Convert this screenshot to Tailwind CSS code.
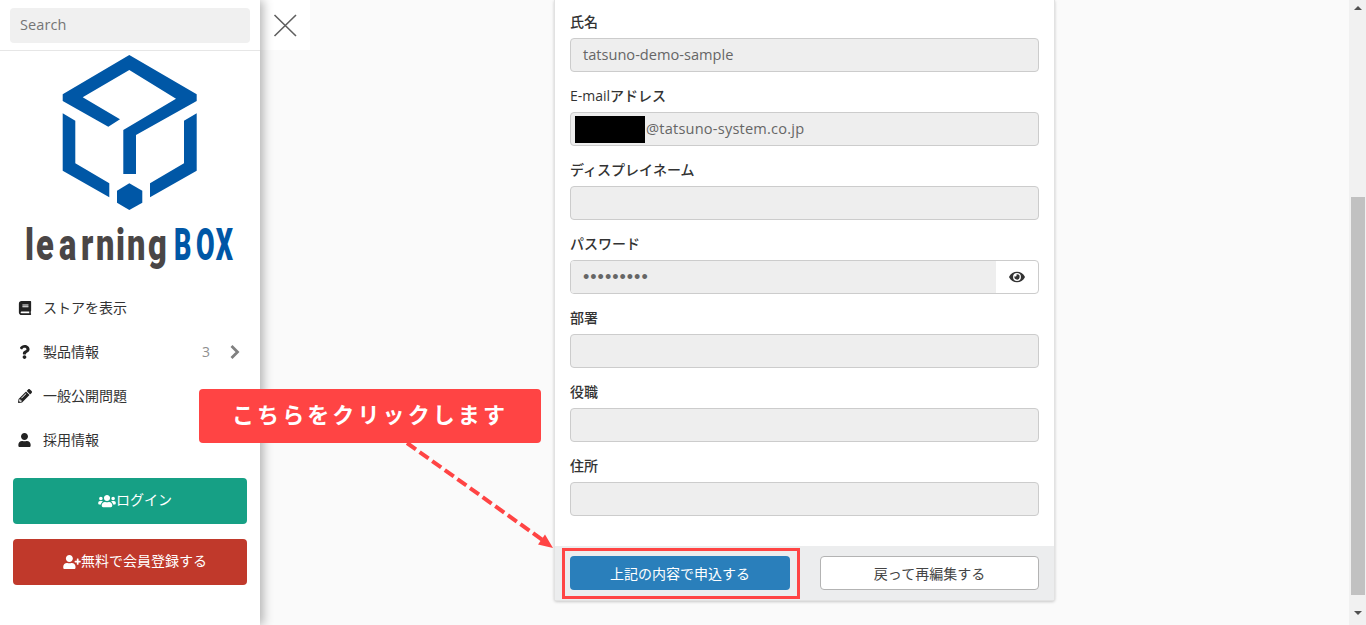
<!DOCTYPE html>
<html lang="ja">
<head>
<meta charset="utf-8">
<script src="https://cdn.jsdelivr.net/npm/@tailwindcss/browser@4"></script>
<title>learningBOX</title>
</head>
<body class="m-0 overflow-hidden">
<div class="relative flex h-[625px] w-[1366px] overflow-hidden bg-[#fafafa] font-['Open_Sans','Noto_Sans_CJK_JP',sans-serif] text-[14px] text-[#333]">

  <!-- Sidebar -->
  <aside class="relative z-10 flex w-[260px] shrink-0 flex-col bg-white shadow-[3px_0_10px_rgba(0,0,0,0.3)]">
    <div class="h-[51px] shrink-0 border-b border-[#e6e6e6] px-[10px] pt-[8px]">
      <div class="flex h-[35px] items-center rounded-[4px] bg-[#f0f0f0] px-[10px] pb-[2px] text-[14.5px] tracking-[0.1px] text-[#757575]">Search</div>
    </div>
    <div class="h-[226px] shrink-0">
      <svg class="block" width="260" height="226" viewBox="0 51 260 226">
        <g fill="#0057a6">
          <path d="M129.3 55 196.7 94.3V101L136 135V174H123.3V130L176 98.7 129.3 70 82.7 97.3 120 119.3 108.3 126.7 62.7 101V94.3Z"/>
          <path d="M62.7 113.3 75.3 120.7V163.3L109.3 183.3V197.3L62.7 170.7Z"/>
          <path d="M196.7 113.3 184 120.7V163.3L150 183.3V197.3L196.7 170.7Z"/>
          <path d="M129.3 183.3 142.3 190.7V202.7L129.3 210 117 202.7V190.7Z"/>
        </g>
        <text transform="translate(0 260) scale(0.75 1)" x="33.3 48 78.7 108 128 154.7 169.3 197.3" font-family="Roboto" font-weight="900" font-size="43.5" fill="#4a4646">learning</text>
        <text transform="translate(0 260) scale(0.62 1)" x="280.6 316 348" font-family="Roboto" font-weight="900" font-size="43.5" fill="#0057a6">BOX</text>
      </svg>
    </div>
    <nav class="flex flex-col px-[17px] pt-[9px]">
      <div class="flex h-[44px] items-center">
        <span class="flex w-[15px] justify-center"><svg class="h-[14px] w-[14px]" viewBox="0 0 448 512" fill="#222"><path d="M448 360V24c0-13.3-10.7-24-24-24H96C43 0 0 43 0 96v320c0 53 43 96 96 96h328c13.3 0 24-10.7 24-24v-16c0-7.5-3.5-14.3-8.9-18.7-4.2-15.4-4.2-59.3 0-74.7 5.4-4.3 8.9-11.1 8.9-18.6zM128 134c0-3.3 2.7-6 6-6h212c3.3 0 6 2.7 6 6v20c0 3.3-2.7 6-6 6H134c-3.3 0-6-2.7-6-6v-20zm0 64c0-3.3 2.7-6 6-6h212c3.3 0 6 2.7 6 6v20c0 3.3-2.7 6-6 6H134c-3.3 0-6-2.7-6-6v-20zm253.4 250H96c-17.7 0-32-14.3-32-32 0-17.6 14.4-32 32-32h285.4c-1.9 17.1-1.9 46.9 0 64z"/></svg></span>
        <span class="ml-[11px] pb-[2px]">ストアを表示</span>
      </div>
      <div class="flex h-[44px] items-center">
        <span class="flex w-[15px] justify-center"><svg class="h-[14px] w-[11px]" viewBox="0 0 384 512" fill="#222"><path d="M202.021 0C122.202 0 70.503 32.703 29.914 91.026c-7.363 10.58-5.093 25.086 5.178 32.874l43.138 32.709c10.373 7.865 25.132 6.026 33.253-4.148 25.049-31.381 43.63-49.449 82.757-49.449 30.764 0 68.816 19.799 68.816 49.631 0 22.552-18.617 34.134-48.993 51.164-35.423 19.86-82.299 44.576-82.299 106.405V320c0 13.255 10.745 24 24 24h72.471c13.255 0 24-10.745 24-24v-5.773c0-42.86 125.268-44.645 125.268-160.627C377.504 66.256 286.902 0 202.021 0zM192 373.459c-38.196 0-69.271 31.075-69.271 69.271 0 38.195 31.075 69.27 69.271 69.27s69.271-31.075 69.271-69.271-31.075-69.27-69.271-69.27z"/></svg></span>
        <span class="ml-[11px] pb-[2px]">製品情報</span>
        <span class="ml-auto pb-[2px] text-[#8f8f8f]">3</span>
        <svg class="ml-[20px] mr-[3px] h-[14px] w-[10px]" viewBox="0 0 10 14" fill="none" stroke="#808080" stroke-width="2.8"><path d="M1.5 1 7.5 7 1.5 13"/></svg>
      </div>
      <div class="flex h-[44px] items-center">
        <span class="flex w-[15px] justify-center"><svg class="h-[14px] w-[14px]" viewBox="0 0 512 512" fill="#222"><path d="M497.9 142.1l-46.1 46.1c-4.7 4.7-12.3 4.7-17 0l-111-111c-4.7-4.7-4.7-12.3 0-17l46.1-46.1c18.7-18.7 49.1-18.7 67.9 0l60.1 60.1c18.8 18.7 18.8 49.1 0 67.9zM284.2 99.8L21.6 362.4.4 483.9c-2.9 16.4 11.4 30.6 27.8 27.8l121.5-21.3 262.6-262.6c4.7-4.7 4.7-12.3 0-17l-111-111c-4.8-4.7-12.4-4.7-17.1 0zM124.1 339.9c-5.5-5.5-5.5-14.3 0-19.8l154-154c5.5-5.5 14.3-5.5 19.8 0s5.5 14.3 0 19.8l-154 154c-5.5 5.5-14.3 5.5-19.8 0zM88 424h48v36.3l-64.5 11.3-31.1-31.1L51.7 376H88v48z"/></svg></span>
        <span class="ml-[11px] pb-[2px]">一般公開問題</span>
      </div>
      <div class="flex h-[44px] items-center">
        <span class="flex w-[15px] justify-center"><svg class="h-[14px] w-[13px]" viewBox="0 0 448 512" fill="#222"><path d="M224 256c70.7 0 128-57.3 128-128S294.7 0 224 0 96 57.3 96 128s57.3 128 128 128zm89.6 32h-16.7c-22.2 10.2-46.9 16-72.9 16s-50.6-5.8-72.9-16h-16.7C60.2 288 0 348.2 0 422.4V464c0 26.5 21.5 48 48 48h352c26.5 0 48-21.5 48-48v-41.6c0-74.2-60.2-134.4-134.4-134.4z"/></svg></span>
        <span class="ml-[11px] pb-[2px]">採用情報</span>
      </div>
    </nav>
    <div class="flex flex-col gap-[15px] px-[13px] pt-[16px] text-white">
      <div class="flex h-[46px] items-center justify-center rounded-[4px] bg-[#16a085] pl-[10px]">
        <svg class="h-[14px] w-[18px]" viewBox="0 0 640 512" fill="#fff"><path d="M96 224c35.3 0 64-28.7 64-64s-28.7-64-64-64-64 28.7-64 64 28.7 64 64 64zm448 0c35.3 0 64-28.7 64-64s-28.7-64-64-64-64 28.7-64 64 28.7 64 64 64zm32 32h-64c-17.6 0-33.5 7.1-45.1 18.6 40.3 22.1 68.9 62 75.1 109.4h66c17.7 0 32-14.3 32-32v-32c0-35.3-28.7-64-64-64zm-256 0c61.9 0 112-50.1 112-112S381.9 32 320 32 208 82.1 208 144s50.1 112 112 112zm76.8 32h-8.3c-20.8 10-43.9 16-68.5 16s-47.6-6-68.5-16h-8.3C179.6 288 128 339.6 128 403.2V432c0 26.5 21.5 48 48 48h288c26.5 0 48-21.5 48-48v-28.8c0-63.6-51.6-115.2-115.2-115.2zm-223.7-13.4C161.5 263.1 145.6 256 128 256H64c-35.3 0-64 28.7-64 64v32c0 17.7 14.3 32 32 32h65.9c6.3-47.4 34.9-87.3 75.2-109.4z"/></svg>
        <span class="pb-[4px]">ログイン</span>
      </div>
      <div class="flex h-[46px] items-center justify-center rounded-[4px] bg-[#c0392b] pl-[10px]">
        <svg class="h-[14px] w-[18px]" viewBox="0 0 640 512" fill="#fff"><path d="M624 208h-64v-64c0-8.8-7.2-16-16-16h-32c-8.8 0-16 7.2-16 16v64h-64c-8.8 0-16 7.2-16 16v32c0 8.8 7.2 16 16 16h64v64c0 8.8 7.2 16 16 16h32c8.8 0 16-7.2 16-16v-64h64c8.8 0 16-7.2 16-16v-32c0-8.8-7.2-16-16-16zm-400 48c70.7 0 128-57.3 128-128S294.7 0 224 0 96 57.3 96 128s57.3 128 128 128zm89.6 32h-16.7c-22.2 10.2-46.9 16-72.9 16s-50.6-5.8-72.9-16h-16.7C60.2 288 0 348.2 0 422.4V464c0 26.5 21.5 48 48 48h352c26.5 0 48-21.5 48-48v-41.6c0-74.2-60.2-134.4-134.4-134.4z"/></svg>
        <span class="pb-[4px]">無料で会員登録する</span>
      </div>
    </div>
  </aside>

  <!-- Main -->
  <main class="flex flex-1 items-start">
    <div class="flex h-[50px] w-[50px] shrink-0 items-center justify-center bg-white">
      <svg width="24" height="24" viewBox="0 0 24 24" stroke="#5f5f5f" stroke-width="1.6" fill="none"><path d="M1.5 2 23 23M23 2 1.5 23"/></svg>
    </div>
    <section class="ml-[244px] flex h-[601px] w-[501px] shrink-0 flex-col rounded-b-[3px] border-x border-b border-[#e2e2e2] bg-white shadow-[0_1px_3px_rgba(0,0,0,0.2)]">
      <div class="flex flex-1 flex-col px-[15px] pt-[12px]">
        <div class="h-[74px]"><div class="mb-[6px] h-[20px] font-medium leading-[20px]">氏名</div><div class="flex h-[34px] items-center rounded-[4px] border border-[#ccc] bg-[#eee] px-[12px] text-[14.6px] text-[#666]">tatsuno-demo-sample</div></div>
        <div class="h-[74px]"><div class="mb-[6px] h-[20px] font-medium leading-[20px]">E-mailアドレス</div><div class="flex h-[34px] items-center rounded-[4px] border border-[#ccc] bg-[#eee] pl-[4px] text-[14.6px] tracking-[0.2px] text-[#666]"><span class="h-[27px] w-[70px] bg-black"></span><span class="ml-px">@tatsuno-system.co.jp</span></div></div>
        <div class="h-[74px]"><div class="mb-[6px] h-[20px] font-medium leading-[20px]">ディスプレイネーム</div><div class="h-[34px] rounded-[4px] border border-[#ccc] bg-[#eee]"></div></div>
        <div class="h-[74px]"><div class="mb-[6px] h-[20px] font-medium leading-[20px]">パスワード</div><div class="flex h-[34px] overflow-hidden rounded-[4px] border border-[#ccc] bg-white"><div class="flex flex-1 items-center bg-[#eee] pl-[12px] font-['Liberation_Sans',sans-serif] text-[18px] tracking-[1px] text-[#666]">•••••••••</div><div class="flex w-[42px] items-center justify-center"><svg class="h-[14px] w-[16px]" viewBox="0 0 576 512" fill="#333"><path d="M572.52 241.4C518.29 135.59 410.93 64 288 64S57.68 135.64 3.48 241.41a32.35 32.35 0 0 0 0 29.19C57.71 376.41 165.07 448 288 448s230.32-71.64 284.52-177.41a32.35 32.35 0 0 0 0-29.19zM288 400a144 144 0 1 1 144-144 143.93 143.93 0 0 1-144 144zm0-240a95.31 95.31 0 0 0-25.31 3.79 47.85 47.85 0 0 1-66.9 66.9A95.78 95.78 0 1 0 288 160z"/></svg></div></div></div>
        <div class="h-[74px]"><div class="mb-[6px] h-[20px] font-medium leading-[20px]">部署</div><div class="h-[34px] rounded-[4px] border border-[#ccc] bg-[#eee]"></div></div>
        <div class="h-[74px]"><div class="mb-[6px] h-[20px] font-medium leading-[20px]">役職</div><div class="h-[34px] rounded-[4px] border border-[#ccc] bg-[#eee]"></div></div>
        <div class="h-[74px]"><div class="mb-[6px] h-[20px] font-medium leading-[20px]">住所</div><div class="h-[34px] rounded-[4px] border border-[#ccc] bg-[#eee]"></div></div>
      </div>
      <div class="flex h-[54px] items-start gap-[30px] bg-[#ecedee] px-[15px] pt-[10px]">
        <div class="flex h-[34px] w-[220px] items-center justify-center rounded-[4px] bg-[#2a7fbb] text-white">上記の内容で申込する</div>
        <div class="flex h-[34px] w-[219px] items-center justify-center rounded-[4px] border border-[#b3b3b3] bg-white text-[#444]">戻って再編集する</div>
      </div>
    </section>
  </main>

  <!-- Scrollbar -->
  <div class="absolute right-0 top-0 flex h-[625px] w-[17px] flex-col items-center bg-[#f1f1f1]">
    <svg class="mt-[6px] h-[4px] w-[8px]" viewBox="0 0 8 4" fill="#505050"><path d="M4 0 8 4H0Z"/></svg>
    <div class="mt-[187px] h-[398px] w-[14px] bg-[#c1c1c1]"></div>
    <svg class="mt-[16px] h-[4px] w-[8px]" viewBox="0 0 8 4" fill="#505050"><path d="M0 0H8L4 4Z"/></svg>
  </div>

  <!-- Annotations -->
  <div class="absolute left-[199px] top-[389px] z-20 flex h-[54px] w-[342px] items-center justify-center rounded-[4px] bg-[#ff4444] pb-[6px] font-['Noto_Sans_CJK_JP',sans-serif] text-[22px] font-bold tracking-[3.1px] text-white">こちらをクリックします</div>
  <svg class="pointer-events-none absolute left-0 top-0 z-20" width="1366" height="625" viewBox="0 0 1366 625" fill="none">
    <path d="M407 443 544 541" stroke="#ff4444" stroke-width="4" stroke-dasharray="11 4.5"/>
    <path d="M553 548 538 544.5 545 534.5Z" fill="#ff4444"/>
  </svg>
  <div class="absolute left-[562px] top-[548px] z-20 h-[51px] w-[238px] border-[3px] border-[#ff4444]"></div>
</div>
</body>
</html>
